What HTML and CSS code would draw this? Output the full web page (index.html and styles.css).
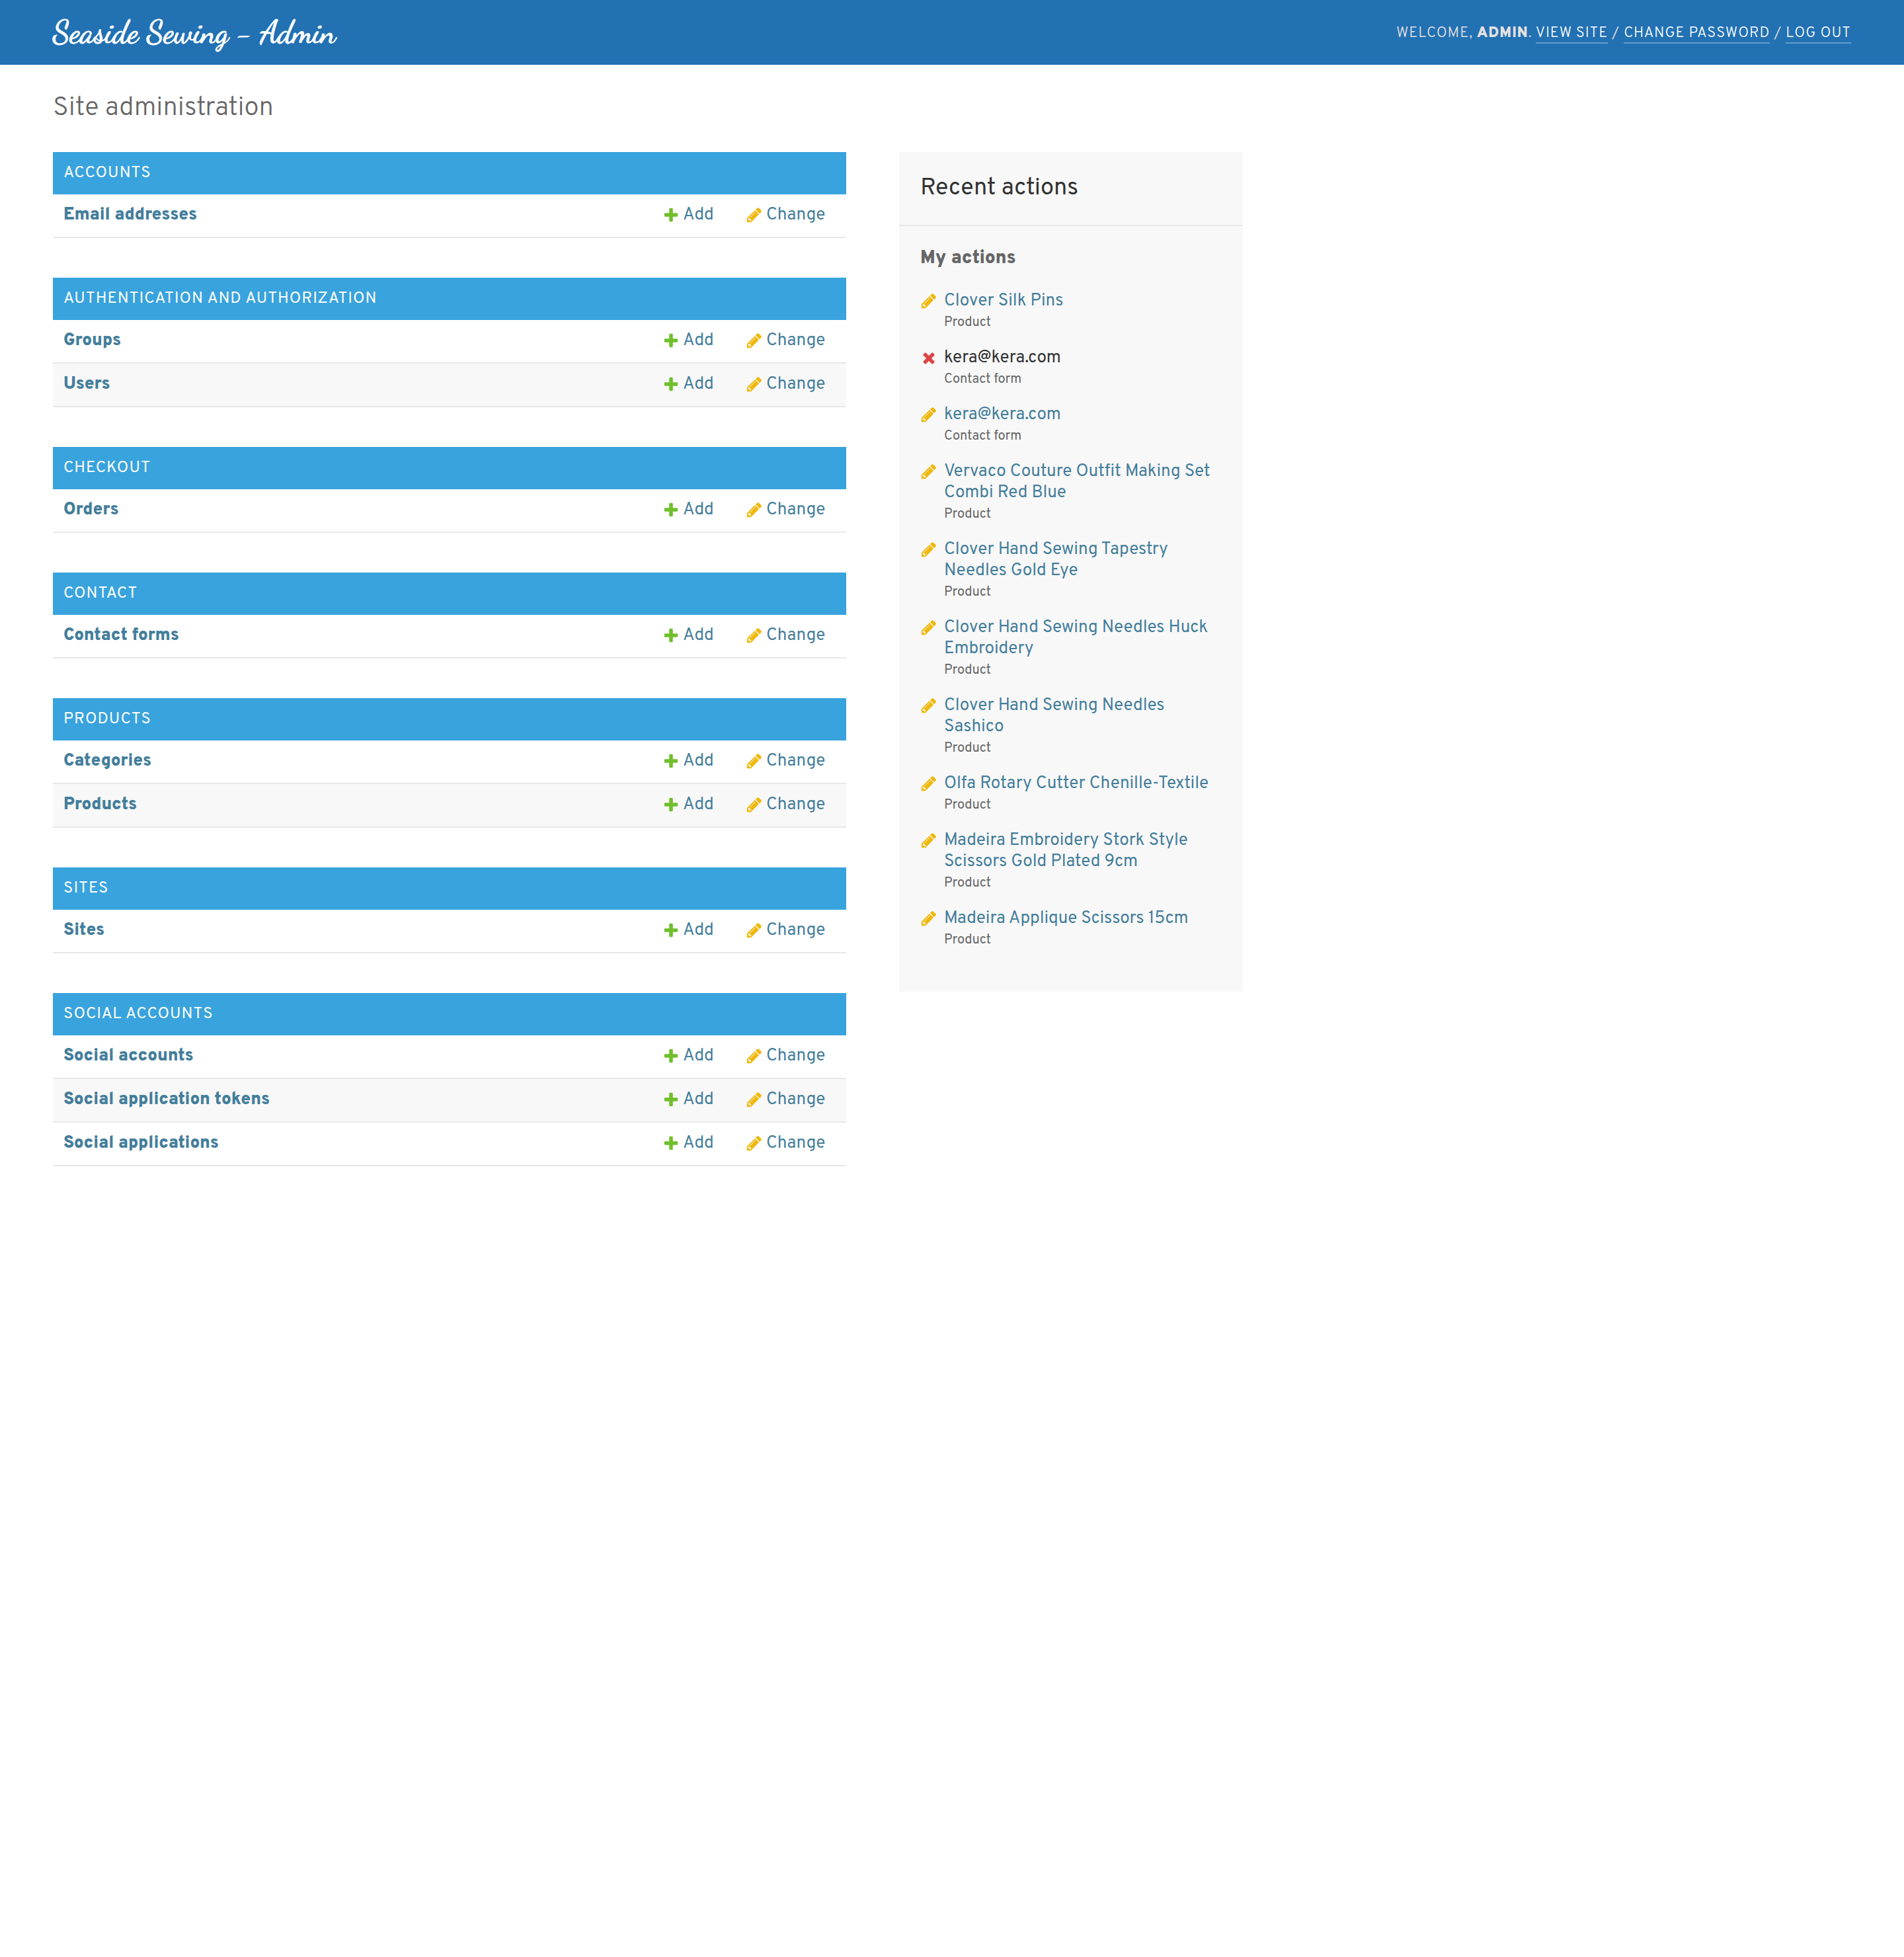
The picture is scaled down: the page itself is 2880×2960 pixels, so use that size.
FILE: index.html
```html
<!DOCTYPE html>
<html lang="en">
<head>
<meta charset="utf-8">
<meta name="viewport" content="width=device-width, initial-scale=1">
<title>Site administration</title>
<link rel="stylesheet" href="styles.css">
</head>
<body>
<svg class="sprite" aria-hidden="true">
  <symbol id="add" viewBox="0 0 1792 1792"><path fill="#70bf2b" d="M1600 796v192q0 40-28 68t-68 28h-416v416q0 40-28 68t-68 28h-192q-40 0-68-28t-28-68v-416h-416q-40 0-68-28t-28-68v-192q0-40 28-68t68-28h416v-416q0-40 28-68t68-28h192q40 0 68 28t28 68v416h416q40 0 68 28t28 68z"/></symbol>
  <symbol id="change" viewBox="0 0 1792 1792"><path fill="#efb80b" d="M491 1536l91-91-235-235-91 91v107h128v128h107zm523-928q0-22-22-22-10 0-17 7l-542 542q-7 7-7 17 0 22 22 22 10 0 17-7l542-542q7-7 7-17zm-54-192l416 416-832 832h-416v-416zm683 96q0 53-37 90l-166 166-416-416 166-165q36-38 90-38 53 0 91 38l235 234q37 39 37 91z"/></symbol>
  <symbol id="delete" viewBox="0 0 1792 1792"><path fill="#dd4646" d="M1490 1322q0 40-28 68l-136 136q-28 28-68 28t-68-28l-294-294-294 294q-28 28-68 28t-68-28l-136-136q-28-28-28-68t28-68l294-294-294-294q-28-28-28-68t28-68l136-136q28-28 68-28t68 28l294 294 294-294q28-28 68-28t68 28l136 136q28 28 28 68t-28 68l-294 294 294 294q28 28 28 68z"/></symbol>
</svg>

<header class="header">
  <a class="brand" href="#">Seaside Sewing - Admin</a>
  <div class="user-tools">Welcome, <strong>admin</strong>. <a href="#">View site</a> / <a href="#">Change password</a> / <a href="#">Log out</a></div>
</header>

<main class="content">
  <h1 class="title">Site administration</h1>
  <div class="columns">
    <div class="apps">
      <table class="module">
        <caption><a href="#">Accounts</a></caption>
        <tr><th scope="row"><a href="#">Email addresses</a></th><td class="add"><a href="#"><svg class="icon"><use href="#add"/></svg>Add</a></td><td class="change"><a href="#"><svg class="icon"><use href="#change"/></svg>Change</a></td></tr>
      </table>
      <table class="module">
        <caption><a href="#">Authentication and Authorization</a></caption>
        <tr><th scope="row"><a href="#">Groups</a></th><td class="add"><a href="#"><svg class="icon"><use href="#add"/></svg>Add</a></td><td class="change"><a href="#"><svg class="icon"><use href="#change"/></svg>Change</a></td></tr>
        <tr><th scope="row"><a href="#">Users</a></th><td class="add"><a href="#"><svg class="icon"><use href="#add"/></svg>Add</a></td><td class="change"><a href="#"><svg class="icon"><use href="#change"/></svg>Change</a></td></tr>
      </table>
      <table class="module">
        <caption><a href="#">Checkout</a></caption>
        <tr><th scope="row"><a href="#">Orders</a></th><td class="add"><a href="#"><svg class="icon"><use href="#add"/></svg>Add</a></td><td class="change"><a href="#"><svg class="icon"><use href="#change"/></svg>Change</a></td></tr>
      </table>
      <table class="module">
        <caption><a href="#">Contact</a></caption>
        <tr><th scope="row"><a href="#">Contact forms</a></th><td class="add"><a href="#"><svg class="icon"><use href="#add"/></svg>Add</a></td><td class="change"><a href="#"><svg class="icon"><use href="#change"/></svg>Change</a></td></tr>
      </table>
      <table class="module">
        <caption><a href="#">Products</a></caption>
        <tr><th scope="row"><a href="#">Categories</a></th><td class="add"><a href="#"><svg class="icon"><use href="#add"/></svg>Add</a></td><td class="change"><a href="#"><svg class="icon"><use href="#change"/></svg>Change</a></td></tr>
        <tr><th scope="row"><a href="#">Products</a></th><td class="add"><a href="#"><svg class="icon"><use href="#add"/></svg>Add</a></td><td class="change"><a href="#"><svg class="icon"><use href="#change"/></svg>Change</a></td></tr>
      </table>
      <table class="module">
        <caption><a href="#">Sites</a></caption>
        <tr><th scope="row"><a href="#">Sites</a></th><td class="add"><a href="#"><svg class="icon"><use href="#add"/></svg>Add</a></td><td class="change"><a href="#"><svg class="icon"><use href="#change"/></svg>Change</a></td></tr>
      </table>
      <table class="module">
        <caption><a href="#">Social Accounts</a></caption>
        <tr><th scope="row"><a href="#">Social accounts</a></th><td class="add"><a href="#"><svg class="icon"><use href="#add"/></svg>Add</a></td><td class="change"><a href="#"><svg class="icon"><use href="#change"/></svg>Change</a></td></tr>
        <tr><th scope="row"><a href="#">Social application tokens</a></th><td class="add"><a href="#"><svg class="icon"><use href="#add"/></svg>Add</a></td><td class="change"><a href="#"><svg class="icon"><use href="#change"/></svg>Change</a></td></tr>
        <tr><th scope="row"><a href="#">Social applications</a></th><td class="add"><a href="#"><svg class="icon"><use href="#add"/></svg>Add</a></td><td class="change"><a href="#"><svg class="icon"><use href="#change"/></svg>Change</a></td></tr>
      </table>
    </div>

    <aside class="recent">
      <h2>Recent actions</h2>
      <h3>My actions</h3>
      <ul class="actions">
        <li><svg class="icon"><use href="#change"/></svg><div><a href="#">Clover Silk Pins</a><span class="kind">Product</span></div></li>
        <li><svg class="icon"><use href="#delete"/></svg><div>kera@kera.com<span class="kind">Contact form</span></div></li>
        <li><svg class="icon"><use href="#change"/></svg><div><a href="#">kera@kera.com</a><span class="kind">Contact form</span></div></li>
        <li><svg class="icon"><use href="#change"/></svg><div><a href="#">Vervaco Couture Outfit Making Set Combi Red Blue</a><span class="kind">Product</span></div></li>
        <li><svg class="icon"><use href="#change"/></svg><div><a href="#">Clover Hand Sewing Tapestry Needles Gold Eye</a><span class="kind">Product</span></div></li>
        <li><svg class="icon"><use href="#change"/></svg><div><a href="#">Clover Hand Sewing Needles Huck Embroidery</a><span class="kind">Product</span></div></li>
        <li><svg class="icon"><use href="#change"/></svg><div><a href="#">Clover Hand Sewing Needles Sashico</a><span class="kind">Product</span></div></li>
        <li><svg class="icon"><use href="#change"/></svg><div><a href="#">Olfa Rotary Cutter Chenille-Textile</a><span class="kind">Product</span></div></li>
        <li><svg class="icon"><use href="#change"/></svg><div><a href="#">Madeira Embroidery Stork Style Scissors Gold Plated 9cm</a><span class="kind">Product</span></div></li>
        <li><svg class="icon"><use href="#change"/></svg><div><a href="#">Madeira Applique Scissors 15cm</a><span class="kind">Product</span></div></li>
      </ul>
    </aside>
  </div>
</main>
</body>
</html>
```
FILE: styles.css
```css
* {
  box-sizing: border-box;
}

body {
  margin: 0;
  background: #fff;
  color: #333;
  font: 26px/32px Overpass, Roboto, "Liberation Sans", sans-serif;
}

a {
  color: #447e9b;
  text-decoration: none;
}

.sprite {
  position: absolute;
  width: 0;
  height: 0;
}

.icon {
  flex: none;
  width: 26px;
  height: 26px;
}

.header {
  display: flex;
  align-items: center;
  justify-content: space-between;
  padding: 17px 80px;
  background: #2271b3;
  color: #e6e1e1;
}

.brand {
  color: #fff;
  font: 400 48px/64px "Dancing Script", Lato, cursive;
  -webkit-text-stroke: 1px #fff;
}

.user-tools {
  padding-top: 4px;
  font-size: 22px;
  font-weight: 300;
  letter-spacing: 1px;
  text-transform: uppercase;
}

.user-tools strong {
  font-weight: 900;
}

.user-tools a {
  border-bottom: 2px solid rgba(255, 255, 255, 0.3);
  color: #fff;
}

.content {
  padding: 42px 80px;
}

.title {
  margin: 0 0 42px;
  color: #666;
  font-size: 40px;
  font-weight: 300;
  line-height: 48px;
}

.columns {
  display: grid;
  grid-template-columns: minmax(0, 1200px) 520px;
  align-items: start;
  gap: 80px;
}

.apps {
  display: grid;
  gap: 60px;
}

.module {
  width: 100%;
  table-layout: fixed;
  border-collapse: separate;
  border-spacing: 0;
}

.module caption {
  padding: 16px;
  background: #39a3dd;
  font-size: 24px;
  letter-spacing: 1px;
  text-align: left;
  text-transform: uppercase;
}

.module caption a {
  color: #fff;
}

.module th,
.module td {
  padding: 16px;
  border-bottom: 2px solid #e8e8e8;
  text-align: left;
}

.module th {
  font-weight: 900;
}

.module tr:nth-child(even) {
  background: #f8f8f8;
}

.module td a {
  display: flex;
  align-items: center;
  gap: 5px;
}

.module .icon {
  margin-bottom: 2px;
}

.add {
  width: 126px;
}

.change {
  width: 168px;
}

.recent {
  padding-bottom: 40px;
  background: #f8f8f8;
}

.recent h2 {
  margin: 0;
  padding: 35px 32px;
  border-bottom: 2px solid #e8e8e8;
  font-size: 36px;
  font-weight: 400;
  line-height: 40px;
}

.recent h3 {
  margin: 0;
  padding: 33px 32px 15px;
  color: #666;
  font-size: 28px;
  font-weight: 900;
}

.actions {
  margin: 0;
  padding: 18px 32px 0;
  list-style: none;
}

.actions li {
  display: flex;
  gap: 10px;
  padding-bottom: 22px;
}

.actions .icon {
  margin-top: 2px;
}

.actions a,
.kind {
  display: block;
}

.kind {
  color: #666;
  font-size: 20px;
}
```
